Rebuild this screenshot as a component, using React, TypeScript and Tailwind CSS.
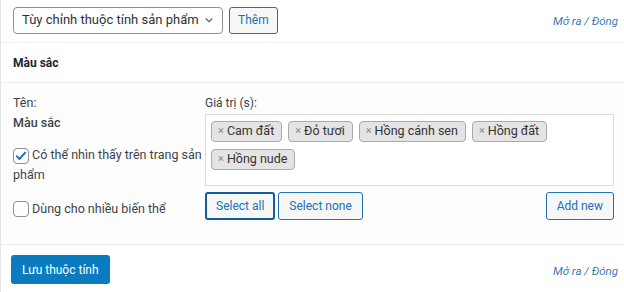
import React, { useState } from 'react';

const tags = ['Cam đất', 'Đỏ tươi', 'Hồng cánh sen', 'Hồng đất', 'Hồng nude'];

const Toggle: React.FC = () => (
  <a className="text-[11.5px] italic text-[#3c7bb0] whitespace-nowrap">Mở ra / Đóng</a>
);

const Box: React.FC<{ checked: boolean; onClick: () => void }> = ({ checked, onClick }) => (
  <span
    onClick={onClick}
    className="inline-flex h-[16px] w-[16px] shrink-0 items-center justify-center rounded-[4px] border border-[#8c8f94] bg-white align-[-4px]"
  >
    {checked && (
      <svg viewBox="0 0 16 16" className="h-[14px] w-[14px]">
        <path d="M3.2 8.2 L6.4 11.4 L12.8 4.2" fill="none" stroke="#2271b1" strokeWidth="2.2" strokeLinecap="round" strokeLinejoin="round" />
      </svg>
    )}
  </span>
);

const App: React.FC = () => {
  const [visible, setVisible] = useState(true);
  const [variation, setVariation] = useState(false);
  const [values, setValues] = useState(tags);

  return (
    <div className="w-[624px] h-[292px] bg-white text-[12px] text-[#3c434a] border-l border-[#e5e5e5]" style={{ fontFamily: 'Roboto, "Noto Sans", sans-serif' }}>
      {/* toolbar */}
      <div className="flex h-[43px] items-center pl-[12px] pr-[6px] pb-[2px] border-b border-[#eeeeee]">
        <div className="flex h-[27px] w-[210px] items-center justify-between rounded-[4px] border border-[#8c8f94] bg-white pl-[8px] pr-[8px] text-[13px] text-[#2c3338] whitespace-nowrap">
          <span>Tùy chỉnh thuộc tính sản phẩm</span>
          <svg viewBox="0 0 12 12" className="h-[10px] w-[10px] shrink-0">
            <path d="M2 4 L6 8 L10 4" fill="none" stroke="#50575e" strokeWidth="1.5" />
          </svg>
        </div>
        <button className="ml-[6px] h-[27px] rounded-[3px] border border-[#2271b1] bg-[#f6f7f7] px-[8px] text-[12px] text-[#2271b1]">
          Thêm
        </button>
        <div className="ml-auto mt-[3px]"><Toggle /></div>
      </div>

      {/* attribute heading */}
      <div className="flex h-[40px] items-center px-[12px] border-b border-[#eeeeee]">
        <strong className="text-[12px] font-bold text-[#1d2327]">Màu sắc</strong>
      </div>

      {/* attribute body */}
      <div className="flex h-[162px] border-b border-[#eeeeee] bg-[#fdfdfd] pl-[12px] pr-[10px] pt-[11px]">
        <div className="w-[192px] shrink-0 pr-[2px] text-[12.5px]">
          <div className="leading-[18px]">Tên:</div>
          <div className="leading-[22px] font-medium">Màu sắc</div>
          <label className="mt-[11px] block leading-[20px]">
            <Box checked={visible} onClick={() => setVisible(!visible)} /> Có thể nhìn thấy trên trang sản phẩm
          </label>
          <label className="mt-[14px] block leading-[20px]">
            <Box checked={variation} onClick={() => setVariation(!variation)} /> Dùng cho nhiều biến thể
          </label>
        </div>

        <div className="flex-1">
          <div className="text-[12px] leading-[18px]">Giá trị (s):</div>
          <div className="mt-[2px] flex h-[72px] flex-wrap content-start gap-x-[6px] gap-y-[7px] border border-[#dddddd] bg-white px-[5px] pt-[6px]">
            {values.map((t) => (
              <span
                key={t}
                className="flex h-[21px] items-center rounded-[4px] border border-[#aaaaaa] bg-[#e4e4e4] pl-[6px] pr-[7px] text-[12.5px] text-[#333333]"
              >
                <span
                  onClick={() => setValues(values.filter((v) => v !== t))}
                  className="mr-[3px] text-[11px] text-[#888888]"
                >
                  ×
                </span>
                {t}
              </span>
            ))}
          </div>
          <div className="mt-[6px] flex items-center">
            <button className="h-[28px] rounded-[3px] border-2 border-[#135e96] bg-[#f6f7f7] px-[9px] text-[12px] text-[#2271b1]">
              Select all
            </button>
            <button className="ml-[3px] h-[28px] rounded-[3px] border border-[#2271b1] bg-[#f6f7f7] px-[10px] text-[12px] text-[#2271b1]">
              Select none
            </button>
            <button className="ml-auto h-[28px] rounded-[3px] border border-[#2271b1] bg-[#f6f7f7] px-[10px] text-[12px] text-[#2271b1]">
              Add new
            </button>
          </div>
        </div>
      </div>

      {/* footer */}
      <div className="flex items-center pl-[10px] pr-[6px] pt-[10px]">
        <button className="h-[29px] rounded-[3px] bg-[#0a7bbf] px-[11px] text-[12px] text-white">
          Lưu thuộc tính
        </button>
        <div className="ml-auto mt-[3px]"><Toggle /></div>
      </div>
    </div>
  );
};

export default App;
